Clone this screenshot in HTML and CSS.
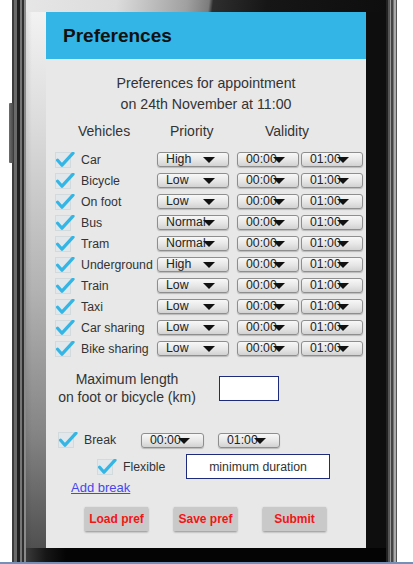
FILE: index.html
```html
<!DOCTYPE html>
<html>
<head>
<meta charset="utf-8">
<title>Preferences</title>
<link rel="stylesheet" href="styles.css">
</head>
<body>
<div class="device">
  <div class="edge-left"><span class="side-key"></span></div>
  <div class="shell">
    <div class="bezel-top"></div>
    <div class="mid">
      <div class="bezel-left"></div>
      <div class="screen">
        <div class="appbar">Preferences</div>
        <div class="content">
          <div class="intro">Preferences for appointment<br>on 24th November at 11:00</div>
          <div class="col-heads"><span>Vehicles</span><span>Priority</span><span>Validity</span></div>
          <div class="rows">
            <div class="row">
              <svg class="chk" width="20" height="16" viewBox="0 0 20 16"><rect x="0.5" y="0.5" width="15" height="15" fill="#e1e7ea" stroke="#d3dadd"/><path d="M2.6 8.2 L7 13.2 L18 1.2" fill="none" stroke="#33b5e5" stroke-width="3.2" stroke-linecap="round" stroke-linejoin="round"/></svg>
              <span class="lbl">Car</span>
              <div class="sel pri">High<i class="caret"></i></div>
              <div class="sel time">00:00<i class="caret"></i></div>
              <div class="sel time">01:00<i class="caret"></i></div>
            </div>
            <div class="row">
              <svg class="chk" width="20" height="16" viewBox="0 0 20 16"><rect x="0.5" y="0.5" width="15" height="15" fill="#e1e7ea" stroke="#d3dadd"/><path d="M2.6 8.2 L7 13.2 L18 1.2" fill="none" stroke="#33b5e5" stroke-width="3.2" stroke-linecap="round" stroke-linejoin="round"/></svg>
              <span class="lbl">Bicycle</span>
              <div class="sel pri">Low<i class="caret"></i></div>
              <div class="sel time">00:00<i class="caret"></i></div>
              <div class="sel time">01:00<i class="caret"></i></div>
            </div>
            <div class="row">
              <svg class="chk" width="20" height="16" viewBox="0 0 20 16"><rect x="0.5" y="0.5" width="15" height="15" fill="#e1e7ea" stroke="#d3dadd"/><path d="M2.6 8.2 L7 13.2 L18 1.2" fill="none" stroke="#33b5e5" stroke-width="3.2" stroke-linecap="round" stroke-linejoin="round"/></svg>
              <span class="lbl">On foot</span>
              <div class="sel pri">Low<i class="caret"></i></div>
              <div class="sel time">00:00<i class="caret"></i></div>
              <div class="sel time">01:00<i class="caret"></i></div>
            </div>
            <div class="row">
              <svg class="chk" width="20" height="16" viewBox="0 0 20 16"><rect x="0.5" y="0.5" width="15" height="15" fill="#e1e7ea" stroke="#d3dadd"/><path d="M2.6 8.2 L7 13.2 L18 1.2" fill="none" stroke="#33b5e5" stroke-width="3.2" stroke-linecap="round" stroke-linejoin="round"/></svg>
              <span class="lbl">Bus</span>
              <div class="sel pri">Normal<i class="caret"></i></div>
              <div class="sel time">00:00<i class="caret"></i></div>
              <div class="sel time">01:00<i class="caret"></i></div>
            </div>
            <div class="row">
              <svg class="chk" width="20" height="16" viewBox="0 0 20 16"><rect x="0.5" y="0.5" width="15" height="15" fill="#e1e7ea" stroke="#d3dadd"/><path d="M2.6 8.2 L7 13.2 L18 1.2" fill="none" stroke="#33b5e5" stroke-width="3.2" stroke-linecap="round" stroke-linejoin="round"/></svg>
              <span class="lbl">Tram</span>
              <div class="sel pri">Normal<i class="caret"></i></div>
              <div class="sel time">00:00<i class="caret"></i></div>
              <div class="sel time">01:00<i class="caret"></i></div>
            </div>
            <div class="row">
              <svg class="chk" width="20" height="16" viewBox="0 0 20 16"><rect x="0.5" y="0.5" width="15" height="15" fill="#e1e7ea" stroke="#d3dadd"/><path d="M2.6 8.2 L7 13.2 L18 1.2" fill="none" stroke="#33b5e5" stroke-width="3.2" stroke-linecap="round" stroke-linejoin="round"/></svg>
              <span class="lbl">Underground</span>
              <div class="sel pri">High<i class="caret"></i></div>
              <div class="sel time">00:00<i class="caret"></i></div>
              <div class="sel time">01:00<i class="caret"></i></div>
            </div>
            <div class="row">
              <svg class="chk" width="20" height="16" viewBox="0 0 20 16"><rect x="0.5" y="0.5" width="15" height="15" fill="#e1e7ea" stroke="#d3dadd"/><path d="M2.6 8.2 L7 13.2 L18 1.2" fill="none" stroke="#33b5e5" stroke-width="3.2" stroke-linecap="round" stroke-linejoin="round"/></svg>
              <span class="lbl">Train</span>
              <div class="sel pri">Low<i class="caret"></i></div>
              <div class="sel time">00:00<i class="caret"></i></div>
              <div class="sel time">01:00<i class="caret"></i></div>
            </div>
            <div class="row">
              <svg class="chk" width="20" height="16" viewBox="0 0 20 16"><rect x="0.5" y="0.5" width="15" height="15" fill="#e1e7ea" stroke="#d3dadd"/><path d="M2.6 8.2 L7 13.2 L18 1.2" fill="none" stroke="#33b5e5" stroke-width="3.2" stroke-linecap="round" stroke-linejoin="round"/></svg>
              <span class="lbl">Taxi</span>
              <div class="sel pri">Low<i class="caret"></i></div>
              <div class="sel time">00:00<i class="caret"></i></div>
              <div class="sel time">01:00<i class="caret"></i></div>
            </div>
            <div class="row">
              <svg class="chk" width="20" height="16" viewBox="0 0 20 16"><rect x="0.5" y="0.5" width="15" height="15" fill="#e1e7ea" stroke="#d3dadd"/><path d="M2.6 8.2 L7 13.2 L18 1.2" fill="none" stroke="#33b5e5" stroke-width="3.2" stroke-linecap="round" stroke-linejoin="round"/></svg>
              <span class="lbl">Car sharing</span>
              <div class="sel pri">Low<i class="caret"></i></div>
              <div class="sel time">00:00<i class="caret"></i></div>
              <div class="sel time">01:00<i class="caret"></i></div>
            </div>
            <div class="row">
              <svg class="chk" width="20" height="16" viewBox="0 0 20 16"><rect x="0.5" y="0.5" width="15" height="15" fill="#e1e7ea" stroke="#d3dadd"/><path d="M2.6 8.2 L7 13.2 L18 1.2" fill="none" stroke="#33b5e5" stroke-width="3.2" stroke-linecap="round" stroke-linejoin="round"/></svg>
              <span class="lbl">Bike sharing</span>
              <div class="sel pri">Low<i class="caret"></i></div>
              <div class="sel time">00:00<i class="caret"></i></div>
              <div class="sel time">01:00<i class="caret"></i></div>
            </div>
          </div>

          <div class="maxlen">
            <div class="maxlen-text">Maximum length<br>on foot or bicycle (km)</div>
            <div class="box"></div>
          </div>

          <div class="brk">
            <svg class="chk" width="20" height="16" viewBox="0 0 20 16"><rect x="0.5" y="0.5" width="15" height="15" fill="#e1e7ea" stroke="#d3dadd"/><path d="M2.6 8.2 L7 13.2 L18 1.2" fill="none" stroke="#33b5e5" stroke-width="3.2" stroke-linecap="round" stroke-linejoin="round"/></svg>
            <span class="lbl brk-lbl">Break</span>
            <div class="sel brk-time">00:00<i class="caret"></i></div>
            <div class="sel brk-time second">01:00<i class="caret"></i></div>
          </div>

          <div class="flex-row">
            <svg class="chk" width="20" height="16" viewBox="0 0 20 16"><rect x="0.5" y="0.5" width="15" height="15" fill="#e1e7ea" stroke="#d3dadd"/><path d="M2.6 8.2 L7 13.2 L18 1.2" fill="none" stroke="#33b5e5" stroke-width="3.2" stroke-linecap="round" stroke-linejoin="round"/></svg>
            <span class="lbl flex-lbl">Flexible</span>
            <div class="box duration">minimum duration</div>
          </div>

          <div class="add"><a href="#">Add break</a></div>

          <div class="btns">
            <div class="btn">Load pref</div>
            <div class="btn">Save pref</div>
            <div class="btn">Submit</div>
          </div>
        </div>
      </div>
      <div class="bezel-right"></div>
    </div>
    <div class="bezel-bottom"></div>
  </div>
  <div class="edge-right"></div>
</div>
<div class="floor"></div>
</body>
</html>
```

FILE: styles.css
```css
html, body {
  margin: 0;
  padding: 0;
}
body {
  width: 413px;
  height: 564px;
  overflow: hidden;
  background: #ffffff;
  font-family: "Liberation Sans", Arial, sans-serif;
}

/* ---------- device frame ---------- */
.device {
  display: flex;
  height: 562px;
  width: 385px;
  margin-left: 12px;
}
.edge-left {
  position: relative;
  width: 14px;
  background: linear-gradient(90deg,
    #3c3c3c 0 2px, #6a6a6a 2px 5px, #202020 5px 8px,
    #767676 8px 10px, #2e2e2e 10px 12px, #8a8a8a 12px 14px);
}
.side-key {
  position: absolute;
  left: -3px;
  top: 103px;
  width: 4px;
  height: 60px;
  background: linear-gradient(90deg, #6e6e6e, #4a4a4a);
  border-radius: 1px;
}
.shell {
  width: 360px;
  display: flex;
  flex-direction: column;
}
.bezel-top {
  height: 12px;
  background: linear-gradient(97deg,
    #e6e6e6 0, #dcdcdc 90px, #a0a0a0 160px, #7c7c7c 182px,
    #2e2e2e 186px, #161616 240px, #0e0e0e 100%);
}
.mid {
  display: flex;
  flex: 1;
}
.bezel-left {
  width: 20px;
  background:
    linear-gradient(90deg, rgba(0,0,0,0.08) 0, rgba(0,0,0,0) 6px),
    linear-gradient(180deg, #f2f2f2 0, #dcdcdc 110px, #b2b2b2 280px, #858585 420px, #505050 536px);
}
.screen {
  width: 320px;
  background: #e8e8e8;
  display: flex;
  flex-direction: column;
}
.bezel-right {
  width: 20px;
  background: #0e0e0e;
}
.bezel-bottom {
  height: 14px;
  background: linear-gradient(90deg, #3a3a3a 0, #161616 20px, #040404 40px, #040404 100%);
}
.edge-right {
  width: 11px;
  background: linear-gradient(90deg,
    #222 0 2px, #555 2px 4px, #9a9a9a 4px 5px, #444 5px 7px,
    #777 7px 8px, #aaa 8px 10px, #555 10px 11px);
}
.floor {
  height: 2px;
  background: #7391b8;
}

/* ---------- screen ---------- */
.appbar {
  height: 47px;
  flex: none;
  background: #33b5e5;
  display: flex;
  align-items: center;
  padding-left: 17px;
  font-size: 19px;
  font-weight: bold;
  color: #111;
}
.content {
  padding-top: 14px;
  color: #333;
}
.intro {
  text-align: center;
  font-size: 14.2px;
  line-height: 21px;
}
.col-heads {
  display: grid;
  grid-template-columns: 92px 95px auto;
  padding-left: 32px;
  margin-top: 6px;
  font-size: 14px;
  line-height: 21px;
}
.rows {
  margin-top: 7px;
}
.row {
  display: grid;
  grid-template-columns: 26px 76px 80px 64px 62px;
  align-items: center;
  height: 21px;
  padding-left: 9px;
}
.chk {
  display: block;
}
.lbl {
  font-size: 12.3px;
  color: #333;
  white-space: nowrap;
}
.sel {
  position: relative;
  box-sizing: border-box;
  height: 15px;
  border: 1px solid #8e8e8e;
  border-radius: 3px;
  background: linear-gradient(180deg, #f8f8f8 0, #e6e6e6 55%, #d2d2d2 100%);
  box-shadow: 0 1px 1px rgba(0,0,0,0.2);
  font-size: 12.3px;
  line-height: 13px;
  padding-left: 8px;
  color: #222;
  white-space: nowrap;
}
.sel.pri { width: 72px; }
.sel.time { width: 62px; }
.caret {
  position: absolute;
  right: 13px;
  top: 4px;
  width: 0;
  height: 0;
  border-left: 6px solid transparent;
  border-right: 6px solid transparent;
  border-top: 6px solid #111;
}

.maxlen {
  display: flex;
  align-items: center;
  margin-top: 11px;
}
.maxlen-text {
  width: 162px;
  text-align: center;
  font-size: 14px;
  line-height: 18px;
}
.box {
  box-sizing: border-box;
  width: 60px;
  height: 25px;
  margin-left: 11px;
  border: 1px solid #1c2b7a;
  background: #fff;
}

.brk {
  display: flex;
  align-items: center;
  height: 16px;
  margin-top: 26px;
  padding-left: 12px;
}
.brk .chk { margin-right: 6px; }
.brk-lbl { width: 57px; }
.brk-time { width: 63px; }
.brk-time.second { width: 62px; margin-left: 14px; }

.flex-row {
  display: flex;
  align-items: center;
  height: 25px;
  margin-top: 6px;
  padding-left: 51px;
}
.flex-row .chk { margin-right: 6px; }
.flex-lbl { width: 63px; }
.box.duration {
  width: 144px;
  margin-left: 0;
  font-size: 12.3px;
  color: #333;
  display: flex;
  align-items: center;
  justify-content: center;
}

.add {
  padding-left: 25px;
  font-size: 13px;
  line-height: 16px;
  padding-top: 1px;
}
.add a {
  color: #4646ee;
  text-decoration: underline;
}

.btns {
  display: flex;
  gap: 26px;
  padding-left: 39px;
  margin-top: 11px;
}
.btn {
  width: 63px;
  height: 24px;
  background: #c9c9c9;
  box-shadow: 0 1px 2px rgba(0,0,0,0.4);
  color: #f21515;
  font-size: 12px;
  font-weight: bold;
  display: flex;
  align-items: center;
  justify-content: center;
}
```
